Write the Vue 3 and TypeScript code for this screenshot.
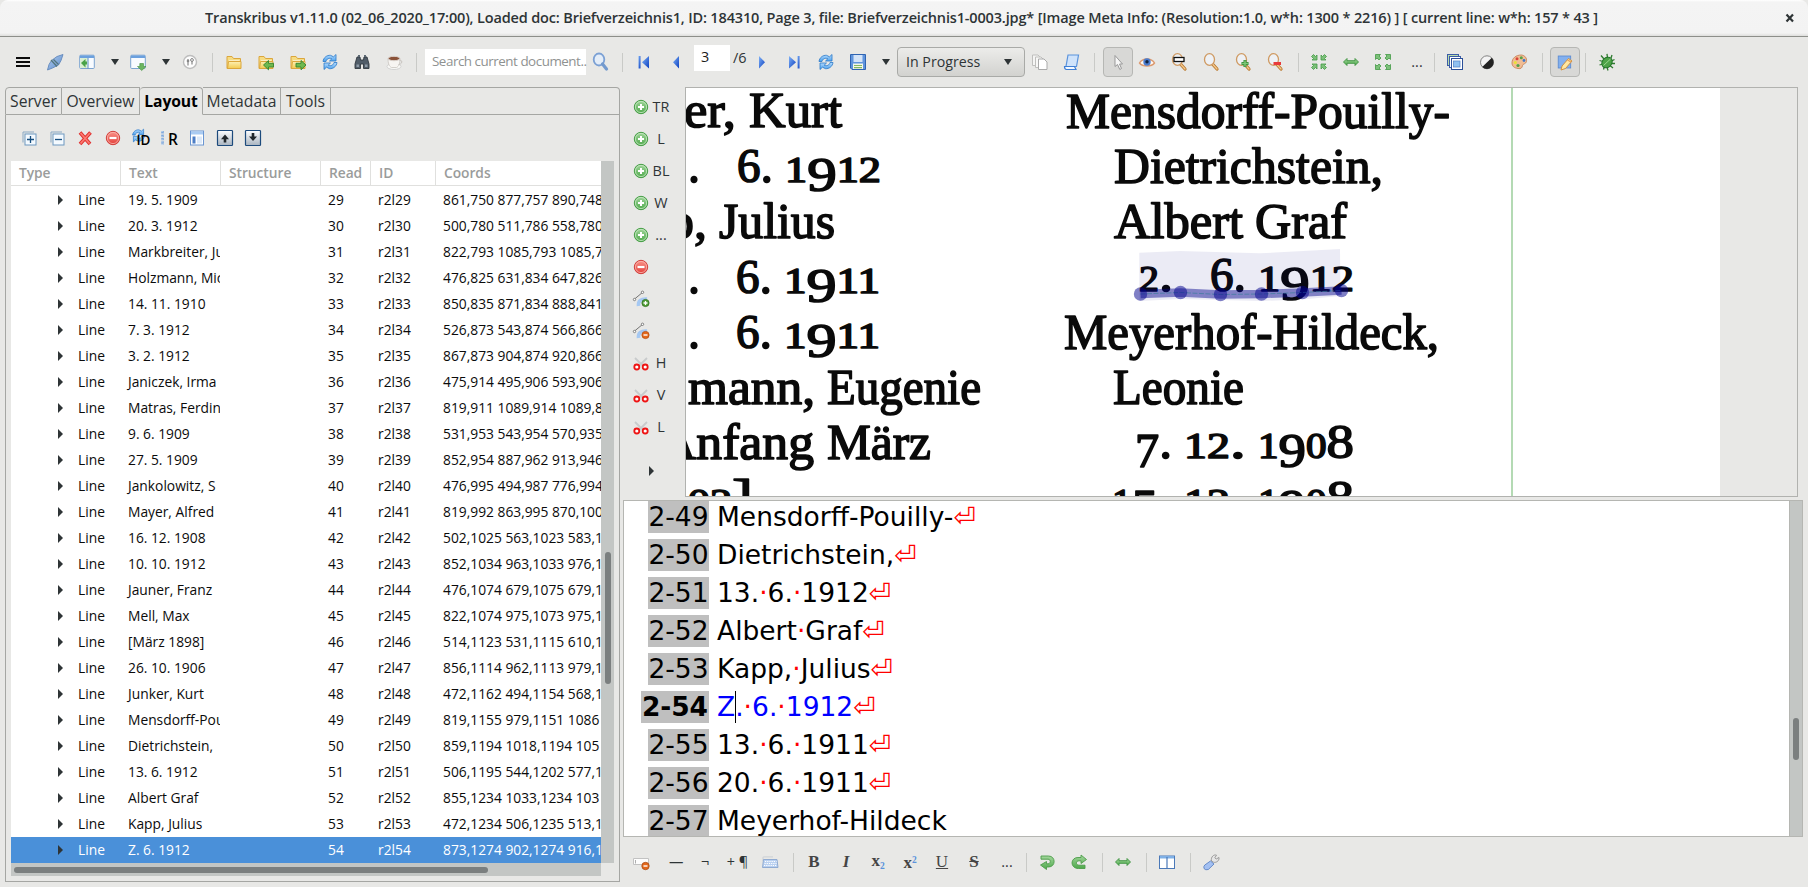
<script setup lang="ts">
interface TreeRow { text: string; read: number; coords: string }
interface Tool { kind: 'icon' | 'sep' | 'caret' | 'dots' | 'toggle' | 'search' | 'page' | 'total' | 'status'; name?: string }
interface Word { s: string; x: number; w: number; y: number }
interface Run { t: string; size: number; dy: number }

const title = 'Transkribus v1.11.0 (02_06_2020_17:00), Loaded doc: Briefverzeichnis1, ID: 184310, Page 3, file: Briefverzeichnis1-0003.jpg* [Image Meta Info: (Resolution:1.0, w*h: 1300 * 2216) ] [ current line: w*h: 157 * 43 ]'

const refresh = '<path d="M3 9.5C3.500 5.500 7 3 10.500 3.300L13.500 4.800 16 2.500V9H9.500L11.800 6.800C9 5.500 6.500 7 6 9.500Z" fill="url(#g-sky)" stroke="#2b78c8" stroke-width=".8"/><path d="M17 10.500C16.500 14.500 13 17 9.500 16.700L6.500 15.200 4 17.500V11H10.500L8.200 13.200C11 14.500 13.500 13 14 10.500Z" fill="url(#g-sky)" stroke="#2b78c8" stroke-width=".8"/>'
const folder = '<path d="M3 4.500h5l1.500 2H16.500V16.500H3Z" fill="#f6dc83" stroke="#dba63c"/><path d="M5 8.500H15.500V10H5Z" fill="#fff"/><path d="M4.500 9.500H17V16.500H3.500Z" fill="url(#g-yellow)" stroke="#dba63c"/>'
const lens = '<path d="M11.500 12 16 17" stroke="#b9772c" stroke-width="3.200" stroke-linecap="round"/><path d="M11.500 12 16 17" stroke="#f3c88e" stroke-width="1.400" stroke-linecap="round"/><ellipse cx="8.500" cy="7.500" rx="5" ry="5.800" fill="#eef1f5" stroke="#cf9a62" stroke-width="1.300"/>'
const wide = '<path d="M2.500 10 6 6.500V8.700H14V6.500L17.500 10 14 13.500V11.300H6V13.500Z" fill="url(#g-green)" stroke="#3b913d" stroke-width=".9"/>'
const outArrow = '<path d="M2.500 2.500H7.500L6 4 8 6 6 8 4 6 2.500 7.500Z" fill="#7cc079" stroke="#439a45" stroke-width=".8"/>'
const inArrow = '<path d="M8 8H3L4.500 6.500 2.500 4.500 4.500 2.500 6.500 4.500 8 3Z" fill="#7cc079" stroke="#439a45" stroke-width=".8"/>'
const four = (a: string) => [0, 90, 180, 270].map(r => `<g transform="rotate(${r} 10 10)">${a}</g>`).join('')
const plusBall = '<circle cx="10" cy="10" r="6.700" fill="url(#g-green)" stroke="#469e46" stroke-width="1"/><circle cx="10" cy="10" r="5.600" fill="none" stroke="#c8e8c4" stroke-width=".8"/><path d="M10 7V13M7 10H13" stroke="#fff" stroke-width="2"/>'
const minusBall = '<circle cx="10" cy="10" r="6.700" fill="url(#g-red)" stroke="#d2403c" stroke-width="1"/><circle cx="10" cy="10" r="5.600" fill="none" stroke="#f8b8b0" stroke-width=".8"/><path d="M6.500 10H13.500" stroke="#fff" stroke-width="2.200"/>'
const curve = '<path d="M7.500 17C7 12 10 9.500 16 10" fill="none" stroke="#a5c8f2" stroke-width="3.600"/><path d="M3 10.500 12 3" stroke="#666" stroke-width=".9"/><circle cx="3.500" cy="10.500" r="1.200" fill="#fff" stroke="#666" stroke-width=".8"/><circle cx="11.500" cy="3.300" r="1.200" fill="#fff" stroke="#666" stroke-width=".8"/>'
const scissors = '<path d="M4 5 12 13M16 5 8 13" stroke="#c9cbcc" stroke-width="1.800"/><circle cx="5.800" cy="14" r="2.500" fill="#fff" stroke="#ee1414" stroke-width="1.800"/><circle cx="14.200" cy="14" r="2.500" fill="#fff" stroke="#ee1414" stroke-width="1.800"/>'
const windowBox = '<rect x="2.700" y="3.200" width="14.600" height="13.300" rx="1" fill="#f8fbff" stroke="#7ba3cf"/><path d="M3 3.500H17V6H3Z" fill="#6ba0de"/>'
const doc = (p: string) => `<rect x="2.500" y="2.500" width="15" height="15" rx=".8" fill="url(#g-steel)" stroke="#1c4a7c" stroke-width="1.200"/><path d="${p}" fill="#20262a"/>`

const icons: Record<string, string> = {
  menu: '<path d="M3 6H17M3 10H17M3 14H17" stroke="#0b0b0b" stroke-width="2"/>',
  plug: '<path d="M2.500 18 4 12.500 6.500 8.500 12 4.500 18 2.500 16 8.500 13.500 13 7.500 16Z" fill="url(#g-blue)" stroke="#6288bb" stroke-width=".9"/><path d="M6 8 12 14.500M8.500 7.500 13.500 12.500" stroke="#53757c" stroke-width="1.300"/>',
  dock: windowBox + '<path d="M3.300 6H10.500V16H3.300Z" fill="#d9efd2"/><path d="M11 6V16.500" stroke="#5b8cc2"/><path d="M4 11 8.500 7V9.500H10V12.500H8.500V15.500Z" fill="#49a348"/>',
  export: windowBox + '<path d="M11.800 11.500H15.500V14.500H18L13.700 18.500 9.500 14.500H11.800Z" fill="#6bb562" stroke="#3f9140" stroke-width=".6"/>',
  tune: '<circle cx="10" cy="10" r="6.500" fill="#fdfdfd" stroke="#bdbdbd" stroke-width="1.400"/><path d="M8 7V13.500M12 6.500V12.500" stroke="#7c7c7c" stroke-width="1.100"/><circle cx="8" cy="9" r="1.300" fill="#888"/><circle cx="12" cy="8" r="1.400" fill="#fff" stroke="#777" stroke-width=".9"/>',
  folder,
  folderIn: folder + '<path d="M7.500 13 12.500 8.500V11.300H17.500V15H12.500V17.800Z" fill="#6fb84e" stroke="#33852f" stroke-width=".9"/>',
  folderOut: folder + '<path d="M18 13 13 8.500V11.300H8V15H13V17.800Z" fill="#6fb84e" stroke="#33852f" stroke-width=".9"/>',
  refresh,
  find: '<path d="M5 5h3l.5 3h3L12 5h3l2 7v4.500H11.500V12h-3v4.500H3V12Z" fill="#505c68" stroke="#30383f" stroke-width=".9"/><path d="M6 3h2V5H6zM12 3h2V5h-2z" fill="#5c6873"/><path d="M4.500 12.500h2.500V15H4.500zM13 12.500h2.500V15H13z" fill="#8e9aa6"/>',
  cup: '<ellipse cx="10" cy="14.500" rx="7" ry="3" fill="#f9f9f7" stroke="#cacaca" stroke-width=".8"/><path d="M4 6.500H16C16 11 15 14.500 12.500 15.500H7.500C5 14.500 4 11 4 6.500Z" fill="#f7f5f2" stroke="#c9c5c0" stroke-width=".8"/><ellipse cx="10" cy="6.500" rx="5.800" ry="2.200" fill="#8a5238" stroke="#dcd5d0"/><path d="M15.500 8.500c3.500-1 3 4-1 4" fill="none" stroke="#c9c5c0"/>',
  search: '<ellipse cx="9" cy="7.500" rx="5.300" ry="6" fill="#e4edf8" stroke="#7ba0d4" stroke-width="1.800"/><path d="M12.500 12 16.500 17" stroke="#739ace" stroke-width="3.200" stroke-linecap="round"/>',
  first: '<path d="M4.500 4H6.500V16.500H4.500Z" fill="url(#g-deep)"/><path d="M15 4V16.500L8 10.200Z" fill="url(#g-deep)"/>',
  prev: '<path d="M13 4V16.500L7 10.200Z" fill="url(#g-deep)"/>',
  next: '<path d="M7 4V16.500L13 10.200Z" fill="url(#g-deep)"/>',
  last: '<path d="M15.500 4H13.500V16.500H15.500Z" fill="url(#g-deep)"/><path d="M5 4V16.500L12 10.200Z" fill="url(#g-deep)"/>',
  save: '<path d="M2.500 2.500H17.500V17.500H4L2.500 16Z" fill="#5f94dd" stroke="#2f64b2"/><path d="M5.500 3H14.500V10H5.500Z" fill="#d4e4f8"/><path d="M5 11.500H15V17H5Z" fill="#f4f7e8"/><path d="M6 13.500H14M6 15.700H14" stroke="#84b860" stroke-width="1.200"/>',
  copies: '<path d="M2.500 3H8L10 5V13.500H2.500Z" fill="#f5f5f4" stroke="#bfbfbd"/><path d="M5.500 5H11L13 7V15.500H5.500Z" fill="#f8f8f7" stroke="#bfbfbd"/><path d="M8.500 7H14L17 10V17.500H8.500Z" fill="#fff" stroke="#aaa"/>',
  scroll: '<path d="M6 3H16.500L14.500 14.500H4Z" fill="#cfe3fb" stroke="#5b93dc" stroke-width="1.200"/><path d="M2.500 14.500H12.500L14 17.500H4.500Q2.500 17.500 2.500 14.500Z" fill="#f4f9ff" stroke="#3f7fd6" stroke-width="1.200"/>',
  pointer: '<path d="M7 3.500V14.500L9.500 12.500 11.800 17.500 13.500 16.500 11.500 12H14.500Z" fill="#f7f7f7" stroke="#999" stroke-width="1"/>',
  eye: '<path d="M2.500 11C5.500 5.500 14.500 5.500 17.500 11 14.500 15 5.500 15 2.500 11Z" fill="#fdf8f2" stroke="#dc9a70" stroke-width="1.500"/><circle cx="10" cy="10" r="3.700" fill="#4a7bcd"/><circle cx="10" cy="9.800" r="1.700" fill="#14233f"/>',
  zoomSel: lens + '<rect x="5" y="5.500" width="10" height="4" fill="#fff" stroke="#111" stroke-width="1.300"/>',
  zoom: lens,
  zoomIn: lens + '<path d="M12 8V15M8.500 11.500H15.500" stroke="#2f8a32" stroke-width="3"/><path d="M12 8.600V14.400M9.100 11.500H14.900" stroke="#7fc87a" stroke-width="1.400"/>',
  zoomOut: lens + '<path d="M8.500 11.500H16" stroke="#e93a3a" stroke-width="3"/>',
  shrink: four(inArrow),
  wide,
  grow: four(outArrow),
  windows: '<rect x="2.500" y="2.500" width="11" height="11" fill="#b8dca8" stroke="#3c5da8"/><rect x="4.500" y="4.500" width="11" height="11" fill="#fff" stroke="#3c5da8"/><rect x="6.500" y="6.500" width="11" height="11" fill="#fff" stroke="#2b4f98"/><rect x="8.500" y="9" width="6.500" height="6" fill="#8fc0f0" stroke="#5a8acb" stroke-width=".8"/>',
  contrast: '<circle cx="10" cy="10.300" r="6.500" fill="#f3f3f3" stroke="#777" stroke-width=".9"/><path d="M14.800 5.700A6.500 6.500 0 0 1 5.200 14.900Z" fill="#222"/>',
  palette: '<path d="M3 11C3 6 7 3 12.500 3 16 3.500 18 6 17.500 9.500 17 12 14 11.500 13.500 13.500 13 16 12 17 9 16.500 5 16 3 14 3 11Z" fill="#f1bd94" stroke="#c6845a" stroke-width=".9"/><circle cx="6.300" cy="10.500" r="1.600" fill="#e8e238"/><circle cx="8" cy="6.800" r="1.500" fill="#d9453a"/><circle cx="12.300" cy="5.800" r="1.500" fill="#58a048"/><circle cx="15" cy="8.500" r="1.400" fill="#3f78cc"/><circle cx="9" cy="13.500" r="1.600" fill="#4fa34a"/>',
  edit: '<rect x="3.200" y="4" width="12.500" height="12" fill="#83b0ee" stroke="#5788d0" stroke-width=".8"/><path d="M7 14 13.500 6.500 17 9 10.500 16.500 6 18Z" fill="#ffe7a0" stroke="#cf8a34" stroke-width=".9"/><path d="M12.500 7.700 16 10.300" stroke="#e9a05c" stroke-width="1.400"/>',
  bug: '<path d="M4 3.500 7 7M10 1.800 10.500 6M15 3 14 6M17.500 7.500 14.500 9M18 11.500H14M16 16 13 13.500M11 18.500 10 15M6.500 17.500 7.500 14M2.500 13 6 12M2.500 8.500 6 9.500" stroke="#2f7a2f" stroke-width="1.300"/><ellipse cx="10" cy="10.500" rx="4.700" ry="5.700" transform="rotate(45 10 10.500)" fill="#4da347" stroke="#23752a"/><path d="M6.500 13.500 13.500 7" stroke="#9bd68f"/>',
  expandAll: '<path d="M4 14.500V4H15" fill="none" stroke="#8aa9c4"/><rect x="6" y="6" width="11" height="11" fill="#f4faff" stroke="#6d97bf"/><path d="M11.500 8V15M8 11.500H15" stroke="#174f80" stroke-width="1.300"/>',
  collapseAll: '<path d="M4 14.500V4H15" fill="none" stroke="#8aa9c4"/><rect x="6" y="6" width="11" height="11" fill="#f4faff" stroke="#6d97bf"/><path d="M8 11.500H15" stroke="#174f80" stroke-width="1.300"/>',
  cross: '<path d="M5 4.500 15 16M15.500 4.500 5 16" stroke="#e0302f" stroke-width="3.600"/><path d="M5.500 5 14.500 15.500M15 5 5.500 15.500" stroke="#fb7a70" stroke-width="1.800"/>',
  minusBall, plusBall, scissors,
  reId: '<g transform="translate(-1 -1) scale(.85)">' + refresh + '</g><text x="5.500" y="17" font-family="Open Sans" font-size="14" font-weight="600" fill="#000" textLength="14" lengthAdjust="spacingAndGlyphs">ID</text>',
  reRead: '<path d="M3.500 3V17" stroke="#7fa8dc" stroke-width="2.600" stroke-dasharray="2.500 .9"/><path d="M3 3V17" stroke="#d8e6f6" stroke-width="1" stroke-dasharray="1 1.600"/><text x="9" y="17" font-size="15.500" font-weight="600" font-family="Open Sans" fill="#000">R</text>',
  layout: '<rect x="3.500" y="3" width="13" height="14" fill="#fff" stroke="#6a96d2"/><path d="M4 3.500H16V6.500H4Z" fill="#a9cbf2"/><rect x="5.500" y="8.500" width="3" height="7" fill="#4d7ec6"/><rect x="10" y="8.500" width="5" height="7" fill="#dce9f9"/>',
  up: doc('M10 6.500 14 11.200H11.300V14.500H8.700V11.200H6Z'),
  down: doc('M10 13 14 8.500H11.300V5H8.700V8.500H6Z'),
  curveAdd: curve + '<circle cx="14.500" cy="14" r="3.600" fill="#4f9e35" stroke="#2f6d20" stroke-width=".8"/><path d="M14.500 12V16M12.500 14H16.500" stroke="#fff" stroke-width="1.300"/>',
  curveDel: curve + '<circle cx="14.500" cy="14" r="3.600" fill="#e4691c" stroke="#b54b10" stroke-width=".8"/><path d="M12.500 14H16.500" stroke="#fff" stroke-width="1.400"/>',
  tagDel: '<path d="M2.500 6.500H17.500V12.500H2.500Z" fill="#fdfdfd" stroke="#c2c2c2"/><path d="M4.500 8V11.500" stroke="#999" stroke-width=".8"/><circle cx="14.500" cy="14" r="3.700" fill="#e4691c" stroke="#a94d16" stroke-width=".8"/><path d="M12.500 14H16.500" stroke="#fff" stroke-width="1.400"/>',
  keyboard: '<path d="M3 9V5.500Q3 4.800 5 4.800H13" fill="none" stroke="#cfd3d8" stroke-width="1.200"/><path d="M3.500 7.500H17L18 15.500H2.500Z" fill="#b9d0f0" stroke="#88a5cf" stroke-width=".9"/><path d="M5 9.500H16.500M4.500 11.500H16.500M4 13.500H17" stroke="#fff" stroke-width="1" stroke-dasharray="1.200 1"/>',
  undo: '<path d="M4 4H11.500C19 4 19 15 11.500 15H9.500V17.500L3.500 13 9.500 9.500V11.800H11C14 11.800 14 7.200 11 7.200H4Z" fill="url(#g-green)" stroke="#4d9c4a" stroke-width=".9"/>',
  redo: '<path d="M16 16.500H9.500C1 16.500 1 5.500 9 5.500H12V3L17.500 7.500 12 11.500V8.800H10C6.500 8.800 6.500 13.200 10 13.200H16Z" fill="url(#g-green)" stroke="#4d9c4a" stroke-width=".9"/>',
  columns: '<rect x="2.500" y="4" width="15" height="12.500" fill="#fff" stroke="#4a78b8"/><path d="M3 4H17V6.500H3Z" fill="#7fb0e6"/><path d="M10 5V16.500" stroke="#4a78b8" stroke-width="1.200"/>',
  wrench: '<path d="M10.500 9C9.500 5 13 2 15.500 3.200L13.800 5.800 15.200 7 18 5.500C18.500 9 15 11 12.500 10.200Z" fill="#e6e6e6" stroke="#888" stroke-width=".8"/><path d="M9.500 9 13 12 7.300 17.500Q4.500 18.500 3 16.500 2.300 14.500 3.800 13Z" fill="#a3c0f2" stroke="#5d83c4" stroke-width=".9"/>',
}

const i = (name: string): Tool => ({ kind: 'icon', name })
const sep: Tool = { kind: 'sep' }
const caret: Tool = { kind: 'caret' }
const dots: Tool = { kind: 'dots' }

const mainTools: Tool[] = [
  i('menu'), i('plug'), i('dock'), caret, i('export'), caret, i('tune'), sep,
  i('folder'), i('folderIn'), i('folderOut'), i('refresh'), i('find'), i('cup'), sep,
  { kind: 'search' }, i('search'), sep,
  i('first'), i('prev'), { kind: 'page' }, { kind: 'total' }, i('next'), i('last'), i('refresh'), i('save'), caret,
  { kind: 'status' }, i('copies'), i('scroll'), sep,
  { kind: 'toggle', name: 'pointer' }, i('eye'), i('zoomSel'), i('zoom'), i('zoomIn'), i('zoomOut'), sep,
  i('shrink'), i('wide'), i('grow'), dots, sep,
  i('windows'), i('contrast'), i('palette'), sep,
  { kind: 'toggle', name: 'edit' }, sep, i('bug'),
]
const treeTools = ['expandAll', 'collapseAll', 'cross', 'minusBall', 'reId', 'reRead', 'layout', 'up', 'down']
const sideTools: [string, string][] = [
  ['plusBall', 'TR'], ['plusBall', 'L'], ['plusBall', 'BL'], ['plusBall', 'W'], ['plusBall', '...'], ['minusBall', ''],
  ['curveAdd', ''], ['curveDel', ''], ['scissors', 'H'], ['scissors', 'V'], ['scissors', 'L'],
]
const tailTools: Tool[] = [sep, i('undo'), i('redo'), sep, i('wide'), sep, i('columns'), sep, i('wrench')]

const tabs = ['Server', 'Overview', 'Layout', 'Metadata', 'Tools']
const columns = ['Type', 'Text', 'Structure', 'Read', 'ID', 'Coords']
const data: [string, string][] = [
  ['19. 5. 1909', '861,750 877,757 890,748'],
  ['20. 3. 1912', '500,780 511,786 558,780'],
  ['Markbreiter, Ju', '822,793 1085,793 1085,7'],
  ['Holzmann, Mic', '476,825 631,834 647,826'],
  ['14. 11. 1910', '850,835 871,834 888,841'],
  ['7. 3. 1912', '526,873 543,874 566,866'],
  ['3. 2. 1912', '867,873 904,874 920,866'],
  ['Janiczek, Irma', '475,914 495,906 593,906'],
  ['Matras, Ferdin', '819,911 1089,914 1089,8'],
  ['9. 6. 1909', '531,953 543,954 570,935'],
  ['27. 5. 1909', '852,954 887,962 913,946'],
  ['Jankolowitz, S', '476,995 494,987 776,994'],
  ['Mayer, Alfred', '819,992 863,995 870,100'],
  ['16. 12. 1908', '502,1025 563,1023 583,1'],
  ['10. 10. 1912', '852,1034 963,1033 976,1'],
  ['Jauner, Franz', '476,1074 679,1075 679,1'],
  ['Mell, Max', '822,1074 975,1073 975,1'],
  ['[März 1898]', '514,1123 531,1115 610,1'],
  ['26. 10. 1906', '856,1114 962,1113 979,1'],
  ['Junker, Kurt', '472,1162 494,1154 568,1'],
  ['Mensdorff-Pou', '819,1155 979,1151 1086'],
  ['Dietrichstein,', '859,1194 1018,1194 105'],
  ['13. 6. 1912', '506,1195 544,1202 577,1'],
  ['Albert Graf', '855,1234 1033,1234 103'],
  ['Kapp, Julius', '472,1234 506,1235 513,1'],
  ['Z. 6. 1912', '873,1274 902,1274 916,1'],
]
const rows: TreeRow[] = data.map(([text, coords], n) => ({ text, coords, read: 29 + n }))

const lines = ['Mensdorff-Pouilly-', 'Dietrichstein,', '13. 6. 1912', 'Albert Graf', 'Kapp, Julius', 'Z. 6. 1912', '13. 6. 1911', '20. 6. 1911', 'Meyerhof-Hildeck']
const active = 5

const words: Word[] = [
  { s: 'er,', x: 684, w: 52, y: 127 }, { s: 'Kurt', x: 749, w: 93, y: 127 },
  { s: '.', x: 688, w: 12, y: 182 }, { s: '6.', x: 737, w: 36, y: 182 }, { s: '1912', x: 785, w: 96, y: 182 },
  { s: 'p,', x: 668, w: 39, y: 238 }, { s: 'Julius', x: 719, w: 116, y: 238 },
  { s: '.', x: 688, w: 12, y: 293 }, { s: '6.', x: 736, w: 36, y: 293 }, { s: '1911', x: 784, w: 96, y: 293 },
  { s: '.', x: 688, w: 12, y: 348 }, { s: '6.', x: 736, w: 36, y: 348 }, { s: '1911', x: 784, w: 96, y: 348 },
  { s: 'mann,', x: 688, w: 127, y: 404 }, { s: 'Eugenie', x: 827, w: 154, y: 404 },
  { s: 'Anfang', x: 659, w: 155, y: 459 }, { s: 'März', x: 827, w: 104, y: 459 },
  { s: '1902]', x: 636, w: 117, y: 514 },
  { s: 'Mensdorff-Pouilly-', x: 1066, w: 384, y: 128 },
  { s: 'Dietrichstein,', x: 1114, w: 269, y: 183 },
  { s: 'Albert', x: 1114, w: 129, y: 238 }, { s: 'Graf', x: 1255, w: 92, y: 238 },
  { s: '2.', x: 1139, w: 34, y: 291 }, { s: '6.', x: 1210, w: 36, y: 291 }, { s: '1912', x: 1258, w: 96, y: 291 },
  { s: 'Meyerhof-Hildeck,', x: 1064, w: 375, y: 349 },
  { s: 'Leonie', x: 1113, w: 131, y: 404 },
  { s: '7.', x: 1135, w: 37, y: 458 }, { s: '12.', x: 1184, w: 62, y: 458 }, { s: '1908', x: 1258, w: 96, y: 458 },
  { s: '15.', x: 1112, w: 60, y: 514 }, { s: '12.', x: 1184, w: 62, y: 514 }, { s: '1908', x: 1258, w: 96, y: 514 },
]

// Old-style figures: 0, 1 and 2 sit at x-height, 3-5, 7 and 9 hang below the baseline.
function runs(s: string): Run[] {
  let prev = 0
  return [...s].map((t) => {
    const size = '012'.includes(t) ? 36 : '3456789'.includes(t) ? 48 : 51
    const drop = '34579'.includes(t) ? 9 : 0
    const dy = drop - prev
    prev = drop
    return { t, size, dy }
  })
}
const nodes: [number, number][] = [[1140.500, 294], [1180.500, 292.500], [1220.500, 294.500], [1261.500, 294], [1302.500, 292.500], [1341.500, 290.500]]
const baseline = nodes.map(p => p.join(',')).join(' ')
</script>

<template>
  <div class="app">
    <svg class="defs" width="0" height="0">
      <defs>
        <linearGradient id="g-sky" x1="0" y1="0" x2="0" y2="1"><stop offset="0" stop-color="#b5dcff" /><stop offset="1" stop-color="#4ba0ec" /></linearGradient>
        <linearGradient id="g-blue" x1="0" y1="0" x2="1" y2="1"><stop offset="0" stop-color="#b2cdf0" /><stop offset="1" stop-color="#5b8bcb" /></linearGradient>
        <linearGradient id="g-deep" x1="0" y1="0" x2="1" y2="1"><stop offset="0" stop-color="#7fb2f7" /><stop offset="1" stop-color="#0c3fc0" /></linearGradient>
        <linearGradient id="g-green" x1="0" y1="0" x2="0" y2="1"><stop offset="0" stop-color="#a2d69c" /><stop offset="1" stop-color="#4ea94b" /></linearGradient>
        <linearGradient id="g-red" x1="0" y1="0" x2="0" y2="1"><stop offset="0" stop-color="#fa958b" /><stop offset="1" stop-color="#e33d38" /></linearGradient>
        <linearGradient id="g-yellow" x1="0" y1="0" x2="0" y2="1"><stop offset="0" stop-color="#fdf0b4" /><stop offset="1" stop-color="#f3cb50" /></linearGradient>
        <linearGradient id="g-steel" x1="0" y1="0" x2="0" y2="1"><stop offset="0" stop-color="#fdfeff" /><stop offset="1" stop-color="#a9b4c0" /></linearGradient>
      </defs>
    </svg>

    <header class="titlebar">
      <span class="title">{{ title }}</span>
      <svg class="close" viewBox="0 0 10 10"><path d="M1.500 1.500 8 8.500M8 1.500 1.500 8.500" stroke="#2e3436" stroke-width="2.200" /></svg>
    </header>

    <div class="toolbar main">
      <template v-for="(t, n) in mainTools" :key="n">
        <svg v-if="t.kind === 'icon'" class="ic" viewBox="0 0 20 20" fill="none" v-html="icons[t.name!]" />
        <span v-else-if="t.kind === 'sep'" class="sep" />
        <span v-else-if="t.kind === 'caret'" class="caret" />
        <span v-else-if="t.kind === 'dots'" class="dots">...</span>
        <span v-else-if="t.kind === 'toggle'" class="toggle"><svg class="ic" viewBox="0 0 20 20" fill="none" v-html="icons[t.name!]" /></span>
        <span v-else-if="t.kind === 'search'" class="search">Search current document..</span>
        <span v-else-if="t.kind === 'page'" class="page">3</span>
        <span v-else-if="t.kind === 'total'" class="total">/6</span>
        <span v-else-if="t.kind === 'status'" class="status"><span>In Progress</span><span class="caret" /></span>
      </template>
    </div>

    <div class="body">
      <section class="left">
        <nav class="tabs">
          <span v-for="tab in tabs" :key="tab" :class="['tab', tab.toLowerCase(), { on: tab === 'Layout' }]">{{ tab }}</span>
          <span class="rest" />
        </nav>
        <div class="panel">
          <div class="treetools">
            <svg v-for="name in treeTools" :key="name" class="ic" viewBox="0 0 20 20" fill="none" v-html="icons[name]" />
          </div>
          <div class="treebox">
            <div class="tree">
              <div class="row head"><span v-for="c in columns" :key="c" class="cell">{{ c }}</span></div>
              <div v-for="r in rows" :key="r.read" :class="['row', { sel: r.read === 54 }]">
                <span class="cell type"><i class="tri" />Line</span>
                <span class="cell">{{ r.text }}</span>
                <span class="cell" />
                <span class="cell">{{ r.read }}</span>
                <span class="cell">r2l{{ r.read }}</span>
                <span class="cell">{{ r.coords }}</span>
              </div>
            </div>
            <div class="vbar"><span class="thumb" /></div>
            <div class="hbar"><span class="thumb" /></div>
          </div>
        </div>
      </section>

      <section class="right">
        <div class="upper">
          <div class="side">
            <div v-for="([name, label], n) in sideTools" :key="n" class="sidetool">
              <svg class="ic" viewBox="0 0 20 20" fill="none" v-html="icons[name]" /><span>{{ label }}</span>
            </div>
            <i class="tri more" />
          </div>
          <svg class="canvas" viewBox="686 88 1111 408">
            <rect x="686" y="88" width="1034" height="408" fill="#fff" />
            <g class="scan">
              <text v-for="(w, n) in words" :key="n" :x="w.x" :y="w.y" :textLength="w.w" lengthAdjust="spacingAndGlyphs"><tspan v-for="(r, k) in runs(w.s)" :key="k" :dy="r.dy" :font-size="r.size">{{ r.t }}</tspan></text>
            </g>
            <polygon points="1139.300,252.700 1180,251 1260,253.300 1340,249 1340.500,296 1302,299.500 1261,301 1180,299 1139.300,301" fill="#000080" fill-opacity=".08" />
            <polyline :points="baseline" fill="none" stroke="#00008b" stroke-opacity=".45" stroke-width="8.500" />
            <polyline :points="baseline" fill="none" stroke="#3c7c9c" stroke-opacity=".7" stroke-width="1" stroke-dasharray="5 1.500" />
            <circle v-for="(p, n) in nodes" :key="n" :cx="p[0]" :cy="p[1]" r="6.700" fill="#00008b" fill-opacity=".5" />
            <rect x="1511" y="88" width="2" height="408" fill="#b4dab4" />
          </svg>
        </div>

        <div class="editor">
          <div class="lines">
            <div v-for="(l, n) in lines" :key="n" :class="['line', { active: n === active }]">
              <span class="no">2-{{ 49 + n }}</span>
              <span class="txt"><template v-for="(part, k) in l.split(' ')" :key="k"><b v-if="k">·</b><template v-if="n === active && !k">Z<i class="cursor" />.</template><template v-else>{{ part }}</template></template><b v-if="n < 8">⏎</b></span>
            </div>
          </div>
          <div class="ebar"><span class="thumb" /></div>
        </div>

        <div class="toolbar foot">
          <svg class="ic" viewBox="0 0 20 20" fill="none" v-html="icons.tagDel" />
          <span class="glyph dash">—</span>
          <span class="glyph">¬</span>
          <span class="glyph pil">+ ¶</span>
          <svg class="ic" viewBox="0 0 20 20" fill="none" v-html="icons.keyboard" />
          <span class="sep" />
          <span class="fmt bold">B</span>
          <span class="fmt ital">I</span>
          <span class="fmt low">x<sub>2</sub></span>
          <span class="fmt high">x<sup>2</sup></span>
          <span class="fmt under">U</span>
          <span class="fmt strike">S</span>
          <span class="dots">...</span>
          <template v-for="(t, n) in tailTools" :key="n">
            <svg v-if="t.kind === 'icon'" class="ic" viewBox="0 0 20 20" fill="none" v-html="icons[t.name!]" />
            <span v-else class="sep" />
          </template>
        </div>
      </section>
    </div>
  </div>
</template>

<style>
html, body { margin: 0; overflow: hidden; background: #e8e8e6; }
</style>

<style scoped>
.app { width: 1808px; height: 887px; display: flex; flex-direction: column; overflow: hidden; background: #e8e8e6; color: #2e3436; font: 14.4px/20px "Open Sans", "Noto Sans", sans-serif; }
.app *, .app { box-sizing: border-box; }
.defs { position: absolute; }
.titlebar { height: 37px; flex: none; display: flex; align-items: center; background: linear-gradient(#fff, #f4f4f4 2px, #f3f3f3 33px, #dededc); border-bottom: 1px solid #8d8f8a; border-radius: 8px 8px 0 0; padding: 0 13px 0 205px; justify-content: space-between; }
.title { font-weight: 600; font-size: 14.5px; letter-spacing: -.156px; white-space: pre; }
.close { width: 10px; height: 10px; }
.toolbar { display: flex; align-items: center; flex: none; }
.main { height: 50px; padding-left: 6.5px; }
.ic { width: 20px; height: 20px; margin: 0 6px; flex: none; overflow: visible; }
.sep { width: 1px; height: 19px; margin: 0 4.5px 0 6.5px; background: #c9cac7; flex: none; }
.caret { border: 4.5px solid transparent; border-top: 6px solid #2e3436; border-bottom: 0; margin: 0 3.5px 0 8px; flex: none; }
.search { width: 161px; height: 26px; line-height: 25px; margin: 0 -2.5px 0 3.5px; padding-left: 7px; background: #fff; color: #8f9291; flex: none; white-space: nowrap; font-size: 13.4px; letter-spacing: -.47px; }
.page { width: 36px; height: 26px; margin: 0 0 8px 2.5px; padding: 2px 0 0 7px; background: #fff; color: #1b1b1b; flex: none; }
.total { width: 13px; margin: 0 0 8px 3px; flex: none; }
.status { width: 128px; height: 30px; margin: 0 -1.5px 0 3.5px; padding: 0 9px 0 8px; display: flex; align-items: center; justify-content: space-between; border: 1px solid #a9aaa7; border-radius: 4px; background: linear-gradient(#ececea, #d2d2cf); flex: none; font-size: 14.2px; }
.toggle { width: 30px; height: 30px; margin: 0 -1.5px 0 3px; display: flex; align-items: center; justify-content: center; border: 1px solid #b6b7b4; border-radius: 4px; background: #d8d8d6; flex: none; }
.toggle .ic { margin: 0; }
.dots { width: 20px; margin-left: 8px; text-align: center; flex: none; }

.body { flex: 1; display: flex; min-height: 0; }
.left { width: 615px; margin: 0 3px 5px 5px; display: flex; flex-direction: column; flex: none; }
.tabs { display: flex; height: 28px; font-size: 15.7px; line-height: 27px; }
.tab { border: 1px solid #a5a6a3; border-left: 0; text-align: center; white-space: nowrap; flex: none; }
.tab.server { width: 57px; border-left: 1px solid #a5a6a3; border-top-left-radius: 4px; }
.tab.overview { width: 78px; }
.tab.layout { width: 63px; letter-spacing: -.1px; }
.tab.metadata { width: 78px; }
.tab.tools { width: 50px; }
.tab.on { font-weight: 700; color: #000; border-bottom-color: transparent; border-radius: 4px 4px 0 0; }
.rest { flex: 1; border: 1px solid #a5a6a3; border-left: 0; border-top-right-radius: 4px; }
.panel { flex: 1; border: 1px solid #a5a6a3; border-top: 0; padding: 0 5px 5px; display: flex; flex-direction: column; min-height: 0; }
.treetools { height: 46px; display: flex; align-items: center; padding-left: 3.5px; }
.treetools .ic { margin: 0 4px; }
.treebox { width: 603px; height: 715px; display: grid; grid-template: 702px 13px / 590px 13px; }
.tree { background: #fff; overflow: hidden; }
.row { display: grid; grid-template-columns: 110px 100px 100px 50px 65px 165px; height: 26px; line-height: 26px; color: #0b0b0b; font-size: 13.8px; }
.head { height: 25px; margin-bottom: 1px; font-weight: 600; color: #9a9c9b; border-bottom: 1px solid #e0e0de; line-height: 23px; }
.cell { overflow: hidden; white-space: nowrap; padding-left: 7px; }
.row:not(.head) .cell:not(:last-child) { border-right: 1px solid transparent; }
.head .cell { border-right: 1px solid #e0e0de; padding-left: 8px; letter-spacing: -.05px; }
.head .cell:last-child { border-right: 0; }
.type { display: flex; align-items: center; padding-left: 47px; }
.tri { width: 5px; height: 10px; margin-right: 15px; background: #2e3436; clip-path: polygon(0 0, 100% 50%, 0 100%); flex: none; }
.sel { background: #4a90d9; color: #fff; }
.vbar, .hbar { background: #c3c6c4; display: flex; }
.thumb { background: #7b7f7f; border-radius: 3px; }
.vbar .thumb { width: 6px; height: 132px; margin: 391px 0 0 4px; }
.hbar .thumb { width: 474px; height: 6px; margin: 4px 0 0 3px; }

.right { flex: 1; display: flex; flex-direction: column; min-width: 0; }
.upper { height: 410px; display: flex; flex: none; }
.side { width: 62px; padding: 4px 0 0 2px; display: flex; flex-direction: column; flex: none; }
.sidetool { height: 32px; display: flex; align-items: center; }
.sidetool span { width: 20px; margin-left: -6px; text-align: center; white-space: nowrap; }
.sidetool .ic { flex: none; }
.more { margin: 23px 0 0 24px; }
.canvas { width: 1113px; height: 410px; border: 1px solid #b1b2af; background: #e8e8e6; flex: none; }
.scan { font-family: "Liberation Serif", serif; fill: #0a0a0a; stroke: #0a0a0a; stroke-width: 1.6px; stroke-linejoin: round; }
.editor { width: 1180px; height: 337px; margin-top: 3px; border: 1px solid #b5b6b2; background: #fff; display: flex; flex: none; overflow: hidden; }
.lines { flex: 1; font: 26.5px/32px "DejaVu Sans", sans-serif; color: #000; }
.line { height: 38px; display: flex; white-space: nowrap; }
.no { margin-left: 24px; width: 61px; background: #bfbfbf; height: 32px; text-align: center; flex: none; }
.active .no { margin-left: 17px; width: 68px; font-weight: 700; letter-spacing: -.1px; }
.txt { margin-left: 8px; }
.active .txt { color: #00f; }
.txt b { font-weight: 400; color: #f00; }
.cursor { display: inline-block; width: 1px; height: 32px; margin-right: -1px; background: #000; vertical-align: top; }
.ebar { width: 13px; background: #c3c6c4; border-left: 1px solid #b5b6b2; display: flex; }
.ebar .thumb { width: 6px; height: 42px; margin: 217px 0 0 3px; }

.foot { height: 50px; padding-left: 2px; }
.glyph { width: 14px; margin-left: 12px; text-align: center; flex: none; white-space: nowrap; }
.dash + .glyph { margin-left: 15px; }
.foot .pil { width: 26px; margin: 0 3.5px 0 12.5px; }
.fmt { width: 20px; margin: 0 6px; text-align: center; font: 17px/20px "Liberation Serif", serif; color: #444; flex: none; white-space: nowrap; }
.fmt sub, .fmt sup { font-size: 9.5px; line-height: 0; font-weight: 700; color: #5b93dc; }
.fmt sub { vertical-align: -3px; }
.fmt sup { vertical-align: 5px; }
.bold, .low, .high { font-weight: 700; }
.low { padding-bottom: 3px; }
.high { padding-top: 2px; }
.ital { font-style: italic; font-weight: 700; }
.under { text-decoration: underline; }
.strike { text-decoration: line-through; font-weight: 700; }
.foot .dots { margin: 0 2px 0 7px; }
</style>
